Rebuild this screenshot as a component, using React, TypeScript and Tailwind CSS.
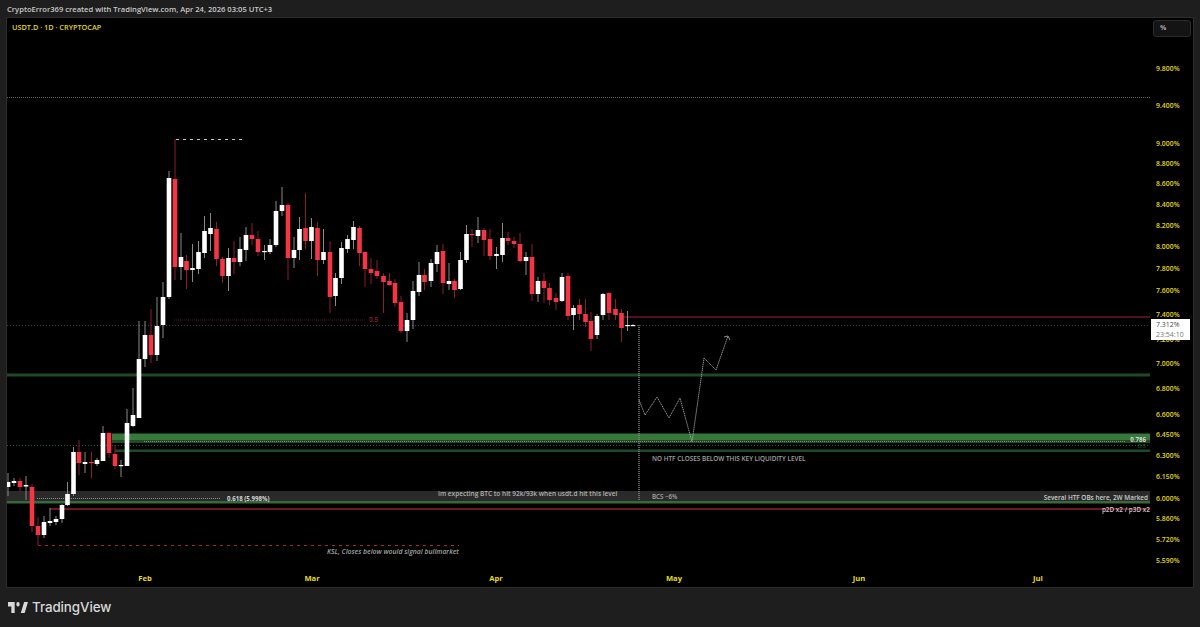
type Candle = [number, number, number, number, number, 'w' | 'r'];
type Note = {
  text: string;
  x: number;
  y: number;
  size: number;
  fill: string;
  weight?: number;
  italic?: boolean;
  end?: boolean;
};

// x, wick top, body top, body bottom, wick bottom, colour (page pixels)
const candles: Candle[] = [
  [8, 473, 482, 487, 496, 'w'], [14, 478, 481, 483, 486, 'w'], [20, 478, 481, 487, 492, 'r'],
  [26, 476, 485, 486.5, 500, 'w'], [32, 484, 487, 526, 532, 'r'], [38, 517, 526, 535, 545, 'r'],
  [44, 516, 522, 535, 538, 'w'], [50, 508, 521, 523, 526, 'w'], [56, 516, 519, 522, 525, 'w'],
  [62, 504, 505, 519, 523, 'w'], [67.5, 482, 494, 505, 506, 'w'], [73.5, 447, 452, 494, 496, 'w'],
  [79, 440, 452, 463, 475, 'r'], [85, 452, 462, 464, 473, 'w'], [91.5, 452, 462, 463, 478, 'r'],
  [97, 458, 460, 464, 466, 'w'], [103, 426, 433, 461, 461, 'w'], [109, 432, 433, 453, 458, 'r'],
  [115, 445, 454, 466, 469, 'r'], [121, 460, 465, 466, 477, 'w'], [127, 409, 423, 466, 466, 'w'],
  [133, 388, 415, 426, 427, 'w'], [139, 321, 359, 418, 418, 'w'], [145, 321, 335, 359, 367, 'w'],
  [151, 309, 335, 355, 363, 'r'], [157, 297, 326, 355, 361, 'w'], [163, 282, 297, 325, 338, 'w'],
  [169, 171, 178, 297, 299, 'w'], [175, 139, 179, 267, 280, 'r'], [181, 233, 257, 267, 280, 'w'],
  [186.5, 255, 261, 270, 289, 'r'], [192.5, 244, 268, 270, 282, 'w'], [198.5, 241, 252, 269, 274, 'w'],
  [204.5, 216, 231, 253, 258, 'w'], [210.5, 213, 228, 234, 251, 'w'], [216.5, 222, 229, 259, 266, 'r'],
  [222.5, 257, 259, 276, 283, 'r'], [228.5, 248, 258, 276, 291, 'w'], [234, 241, 258, 262, 274, 'r'],
  [240, 237, 249, 262, 266, 'w'], [246, 227, 235, 250, 261, 'w'], [252, 223, 235, 239, 245, 'r'],
  [258, 231, 239, 252, 256, 'r'], [264.5, 245, 251, 252, 260, 'w'], [270, 239, 245, 252, 254, 'w'],
  [276, 201, 211, 245, 247, 'w'], [282, 187, 205, 211, 216, 'w'], [288, 203, 205, 258, 280, 'r'],
  [294, 237, 250, 258, 268, 'w'], [299.5, 217, 229, 250, 260, 'w'], [305.5, 193, 228, 241, 249, 'r'],
  [311.5, 218, 227, 241, 259, 'w'], [317.5, 222, 228, 260, 276, 'r'], [323.5, 229, 252, 260, 264, 'w'],
  [330, 241, 252, 297, 313, 'r'], [335.5, 273, 278, 296, 306, 'w'], [341.5, 242, 248, 278, 284, 'w'],
  [347.5, 235, 239, 249, 253, 'w'], [353.5, 221, 227, 240, 249, 'w'], [359.5, 226, 228, 253, 266, 'r'],
  [365, 252, 252, 269, 287, 'r'], [371, 258, 269, 273, 284, 'r'], [377, 260, 271, 276, 279, 'r'],
  [383.5, 273, 276, 282, 313, 'r'], [389.5, 273, 281, 285, 286, 'r'], [395, 279, 283, 303, 307, 'r'],
  [401, 296, 302, 331, 333, 'r'], [407, 313, 320, 331, 342, 'w'], [413, 281, 291, 320, 329, 'w'],
  [419, 262, 275, 292, 296, 'w'], [424.5, 269, 275, 282, 290, 'r'], [431, 259, 263, 281, 287, 'w'],
  [437, 245, 252, 264, 272, 'w'], [443, 244, 251, 283, 294, 'r'], [449, 263, 281, 284, 290, 'w'],
  [454.5, 279, 281, 290, 298, 'r'], [460.5, 252, 260, 289, 290, 'w'], [466.5, 225, 234, 260, 263, 'w'],
  [472, 229, 234, 235, 247, 'r'], [478, 217, 230, 236, 243, 'w'], [484, 228, 230, 240, 256, 'r'],
  [490, 229, 239, 256, 260, 'r'], [496.5, 247, 254, 256, 269, 'w'], [502.5, 223, 238, 255, 262, 'w'],
  [508, 232, 238, 241, 245, 'r'], [514, 237, 241, 244, 248, 'r'], [520, 233, 244, 261, 262, 'r'],
  [526, 252, 257, 261, 275, 'w'], [532, 244, 257, 294, 301, 'r'], [538, 277, 281, 294, 302, 'w'],
  [544, 273, 281, 288, 303, 'r'], [549.5, 283, 288, 300, 305, 'r'], [556, 293, 298, 302, 310, 'r'],
  [562, 273, 277, 301, 302, 'w'], [568, 273, 276, 316, 320, 'r'], [573.5, 305, 308, 315, 330, 'w'],
  [579.5, 299, 305, 314, 320, 'r'], [585.5, 299, 314, 322, 327, 'r'], [591, 312, 321, 339, 351, 'r'],
  [597, 314, 316, 335, 339, 'w'], [603, 293, 294, 315, 320, 'w'], [609, 292, 293, 313, 320, 'r'],
  [615.5, 299, 309, 315, 320, 'r'], [621.5, 309, 313, 328, 342, 'r'], [627.5, 311, 325, 326, 331, 'w'],
  [633, 324, 325, 326, 326, 'w'],
];

const prices: [string, number][] = [
  ['9.800%', 68], ['9.400%', 105], ['9.000%', 143], ['8.800%', 163], ['8.600%', 183], ['8.400%', 204],
  ['8.200%', 225], ['8.000%', 246], ['7.800%', 268], ['7.600%', 290], ['7.400%', 314], ['7.200%', 339],
  ['7.000%', 363], ['6.800%', 388], ['6.600%', 414], ['6.450%', 434], ['6.300%', 455], ['6.150%', 476],
  ['6.000%', 498], ['5.860%', 518], ['5.720%', 539], ['5.590%', 560],
];

const months: [string, number][] = [
  ['Feb', 145], ['Mar', 312], ['Apr', 496], ['May', 674], ['Jun', 859], ['Jul', 1038],
];

const notes: Note[] = [
  { text: '0.5', x: 369, y: 322, size: 6.5, fill: '#8c2232', weight: 600 },
  { text: '0.786', x: 1146, y: 442, size: 6.1, fill: '#d5dcd5', weight: 700, end: true },
  { text: '0.5', x: 1146, y: 447.5, size: 6.1, fill: '#2f6b34', end: true },
  { text: 'NO HTF CLOSES BELOW THIS KEY LIQUIDITY LEVEL', x: 652, y: 461, size: 6.4, fill: '#a0a0a0', weight: 600 },
  { text: 'Im expecting BTC to hit 92k/93k when usdt.d hit this level', x: 438, y: 495.5, size: 6.5, fill: '#b0b0b0', weight: 600 },
  { text: '0.618 (5.998%)', x: 227, y: 500.5, size: 6.1, fill: '#d8d8d8', weight: 700 },
  { text: 'BCS ~6%', x: 652, y: 498.5, size: 6.2, fill: '#a8a8a8', weight: 600 },
  { text: 'Several HTF OBs here, 2W Marked', x: 1148, y: 499.5, size: 6.4, fill: '#cccccc', weight: 600, end: true },
  { text: 'p2D x2 / p3D x2', x: 1150, y: 511.5, size: 6.4, fill: '#c4c4c4', weight: 600, end: true },
  { text: 'KSL, Closes below would signal bullmarket', x: 327, y: 553.5, size: 6.85, fill: '#a0a0a0', weight: 600, italic: true },
];

function Chart() {
  return (
    <svg viewBox="7 18 1186 569" className="absolute inset-0 h-full w-full">
      {/* zones behind the candles */}
      <rect x="7" y="491" width="1143" height="10" fill="#2a2a2a" />
      <rect x="7" y="501" width="1143" height="2.5" fill="#38693a" />
      <rect x="7" y="373.5" width="1143" height="3" fill="#1f4a24" />
      <rect x="112" y="433.5" width="1038" height="6.5" fill="#37793b" />
      <rect x="112" y="440" width="1038" height="3" fill="#1f4a24" />
      <rect x="115" y="449.5" width="1035" height="2.5" fill="#1f4a24" />
      <rect x="50" y="508" width="1100" height="2" fill="#6b1526" />
      <rect x="622" y="316" width="528" height="2" fill="#4f121d" />

      <line x1="7" y1="97.5" x2="1150" y2="97.5" stroke="#5e5e5e" strokeDasharray="1 1" />
      <line x1="7" y1="325.5" x2="1150" y2="325.5" stroke="#3c3c3c" strokeDasharray="1 2" />
      <line x1="7" y1="445.5" x2="1150" y2="445.5" stroke="#2f5a32" strokeDasharray="1 2" />
      <line x1="144" y1="441.5" x2="1126" y2="441.5" stroke="#b5bdb5" strokeOpacity="0.6" strokeDasharray="1 1" />
      <line x1="37" y1="498.5" x2="221" y2="498.5" stroke="#8c8c8c" strokeDasharray="1 1" />
      <line x1="174" y1="320" x2="366" y2="320" stroke="#5e1622" strokeWidth="1.2" strokeDasharray="1 1" />
      <line x1="176" y1="139.5" x2="244" y2="139.5" stroke="#c8c8c8" strokeDasharray="3 4" />
      <line x1="38" y1="545.5" x2="459" y2="545.5" stroke="#a8233a" strokeDasharray="3 4" />

      {candles.map(([x, wt, bt, bb, wb, c]) => (
        <g key={x}>
          <line x1={x} y1={wt} x2={x} y2={wb} stroke={c === 'w' ? '#8a8a8a' : '#8c1c30'} strokeWidth="1" />
          <rect
            x={x - 2.3}
            y={bt}
            width="4.6"
            height={Math.max(bb - bt, 1.2)}
            fill={c === 'w' ? '#ffffff' : '#f23645'}
          />
        </g>
      ))}

      <line x1="639" y1="325" x2="639" y2="501" stroke="#8a8a8a" strokeWidth="1.4" strokeDasharray="1 1" />
      <polyline
        points="639,400 645,415 657,397 669,418 680,398 692,442 704,358 716,370 728,336"
        fill="none"
        stroke="#a0a0a0"
        strokeWidth="0.9"
        strokeDasharray="1.4 0.6"
      />
      <polyline points="724,337 728,336 730,340" fill="none" stroke="#a0a0a0" strokeWidth="0.9" />

      {notes.map((n) => (
        <text
          key={n.text + n.x}
          x={n.x}
          y={n.y}
          fontSize={n.size}
          fontWeight={n.weight}
          fontStyle={n.italic ? 'italic' : undefined}
          textAnchor={n.end ? 'end' : undefined}
          fill={n.fill}
        >
          {n.text}
        </text>
      ))}

      {months.map(([label, x]) => (
        <text key={label} x={x} y={581} fontSize="7.6" fontWeight="700" textAnchor="middle" fill="#e6dc1e">
          {label}
        </text>
      ))}
      {prices.map(([label, y]) => (
        <text key={label} x={1156} y={y + 2.5} fontSize="6.9" fontWeight="600" fill="#e0d61e">
          {label}
        </text>
      ))}
    </svg>
  );
}

function Logo() {
  return (
    <svg viewBox="2 6 36 15" className="h-[11px] w-[20px]" preserveAspectRatio="none" fill="#d8d8d8">
      <path d="M14 6H2v6h6v9h6V6Zm18 15h-7l6-15h7l-6 15Zm-12-9a3 3 0 1 0 0-6 3 3 0 0 0 0 6Z" />
    </svg>
  );
}

export default function App() {
  return (
    <div className="flex h-[627px] w-[1200px] flex-col overflow-hidden bg-[#1e1e1e] font-['Open_Sans',sans-serif]">
      <header className="flex h-[18px] items-center pl-[7px] pt-[2px] text-[7.6px] font-semibold leading-none text-[#c8c8c8]">
        CryptoError369 created with TradingView.com, Apr 24, 2026 03:05 UTC+3
      </header>

      <div className="relative mx-[7px] h-[569px] bg-black outline outline-1 outline-[#2c2c2c]">
        <Chart />
        <div className="relative flex items-start justify-between pl-[5px] pr-[2px] pt-[2px]">
          <span className="pt-[2px] text-[7.3px] font-semibold leading-[10px] text-[#e0d61e]">
            USDT.D · 1D · CRYPTOCAP
          </span>
          <div className="flex h-[17px] w-[38px] items-center rounded-[3px] border border-[#2c2c2c] bg-[#141414] pl-[6px] text-[7px] font-bold text-[#a8a8a8]">
            %
          </div>
        </div>
        {/* live price tag sits on top of the axis labels */}
        <div className="absolute left-[1144px] top-[301px] flex h-[21px] w-[39px] flex-col bg-white pl-[5px] pt-[1px] text-[7px] font-medium leading-[9.5px]">
          <span className="text-[#4a4a4a]">7.312%</span>
          <span className="text-[#777777]">23:54:10</span>
        </div>
      </div>

      <footer className="flex flex-1 items-center gap-[4px] pl-[8px] pt-[1px]">
        <Logo />
        <span className="font-['Inter',sans-serif] text-[13.4px] font-medium leading-none tracking-[-0.1px] text-[#d8d8d8]">
          TradingView
        </span>
      </footer>
    </div>
  );
}
